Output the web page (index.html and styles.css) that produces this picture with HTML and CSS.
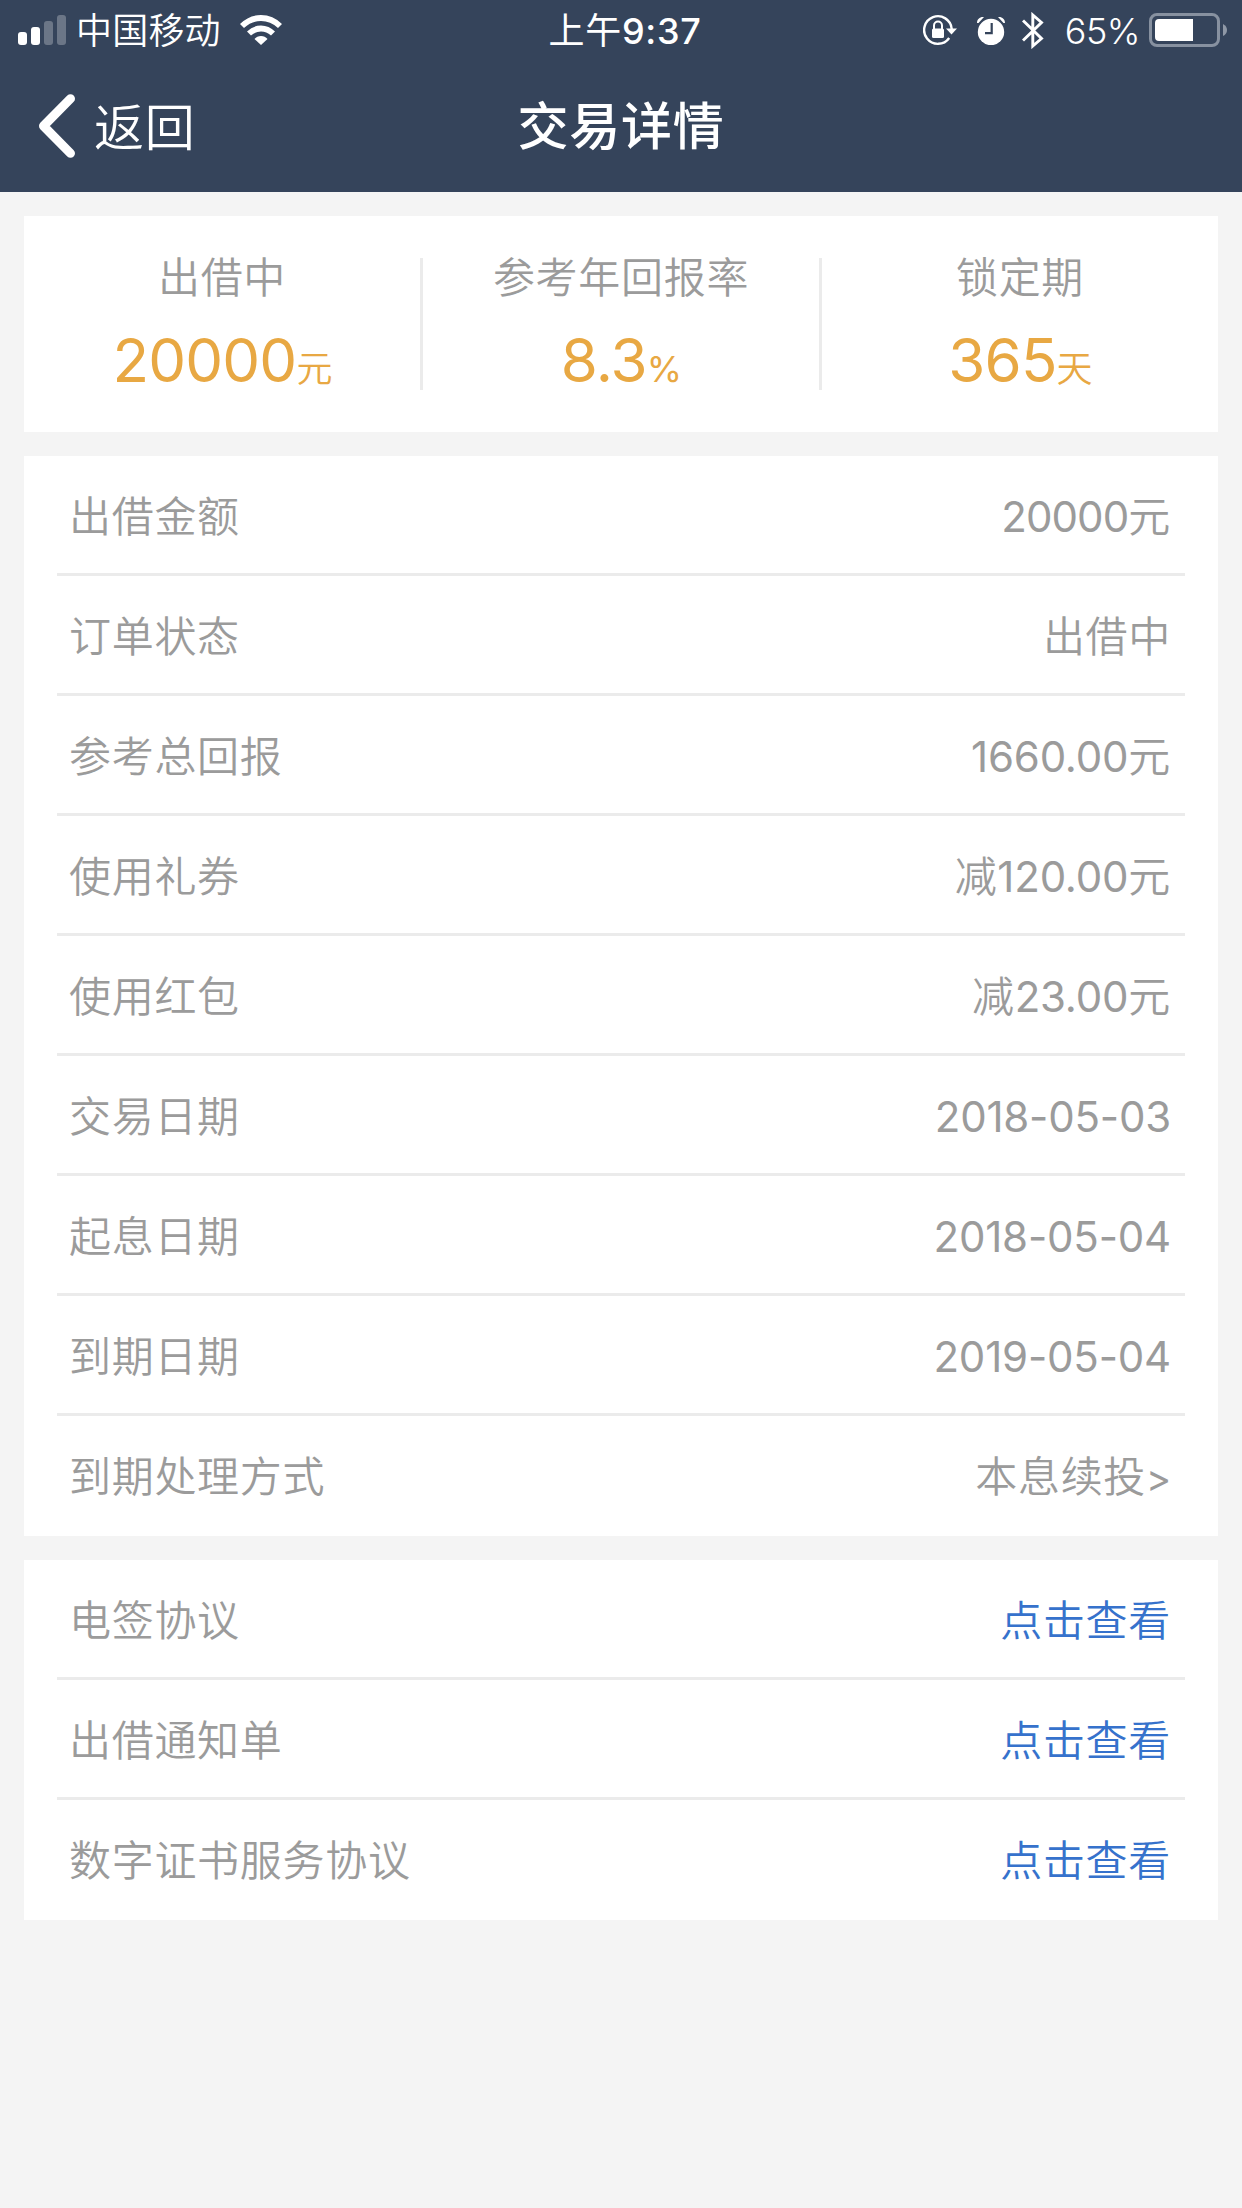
FILE: index.html
```html
<!DOCTYPE html>
<html lang="zh-CN">

<head>
    <meta charset="UTF-8">
    <meta name="viewport" content="width=device-width, initial-scale=1.0">
    <title>交易详情</title>
    <link rel="stylesheet" href="styles.css">
</head>

<body>

    <header class="header">
        <div class="status">
            <div class="status-left">
                <svg class="signal" width="48" height="30" viewBox="0 0 48 30" fill="#fff">
                    <rect x="0" y="17" width="9" height="13" rx="3" />
                    <rect x="13" y="12" width="9" height="18" rx="3" />
                    <rect x="26" y="6" width="9" height="24" rx="3" opacity=".27" />
                    <rect x="39" y="0" width="9" height="30" rx="3" opacity=".27" />
                </svg>
                <span class="carrier">中国移动</span>
                <svg class="wifi" width="42" height="30" viewBox="0 0 42 30" fill="#fff">
                    <path d="M0 9Q9 0 21 0T42 9L38 13Q30.500 6 21 6T4 13Z" />
                    <path d="M7 16.500Q13 10.500 21 10.500T35 16.500L31 20.500Q26.500 16.500 21 16.500T11 20.500Z" />
                    <path d="M14.500 24Q17 21 21 21T27.500 24L21 30Z" />
                </svg>
            </div>
            <div class="time">上午<b>9:37</b></div>
            <div class="status-right">
                <svg class="lock" width="34" height="32" viewBox="0 0 34 32">
                    <path d="M26.200 24A13.800 13.800 0 1 1 28.700 15" fill="none" stroke="#fff" stroke-width="2.400" />
                    <path d="M23 14.500H34L28.500 20.500Z" fill="#fff" />
                    <rect x="9" y="14.500" width="12" height="9.500" rx="1.500" fill="#fff" />
                    <path d="M11 15V11.500a4 4 0 0 1 8 0V15" fill="none" stroke="#fff" stroke-width="2" />
                </svg>
                <svg class="alarm" width="28" height="29" viewBox="0 0 28 29">
                    <circle cx="14" cy="16" r="13.200" fill="#fff" />
                    <path d="M0 7C0 3 3 .5 7 1L1.500 7ZM28 7C28 3 25 .5 21 1L26.500 7Z" fill="#fff" />
                    <path d="M14.700 7V17.200H8" fill="none" stroke="#35445b" stroke-width="2.200" />
                </svg>
                <svg class="bluetooth" width="22" height="37" viewBox="0 0 22 37">
                    <path d="M1 8.500L19.500 26.500L10.800 34V3L19.500 10.500L1 28.500" fill="none" stroke="#fff" stroke-width="2.900" />
                </svg>
                <span class="percent">65%</span>
                <svg class="battery" width="78" height="34" viewBox="0 0 78 34">
                    <rect x="1.500" y="1.500" width="68" height="31" rx="6.500" fill="none" stroke="#8791a0" stroke-width="3" />
                    <path d="M10 6H44V28H10Q6 28 6 24V10Q6 6 10 6Z" fill="#fff" />
                    <path d="M74 11Q78 13 78 17T74 23Z" fill="#8f98a6" />
                </svg>
            </div>
        </div>
        <div class="nav">
            <a class="back">
                <svg width="38" height="64" viewBox="0 0 38 64">
                    <path d="M32.500 4.700L5.500 32L32.500 59.300" fill="none" stroke="#fff" stroke-width="9" stroke-linecap="round" stroke-linejoin="round" />
                </svg>
                <span>返回</span>
            </a>
            <h1>交易详情</h1>
        </div>
    </header>

    <div class="card summary">
        <div class="item">
            <p class="label">出借中</p>
            <p class="value">20000<span>元</span></p>
        </div>
        <div class="item">
            <p class="label">参考年回报率</p>
            <p class="value">8.3<span class="rate">%</span></p>
        </div>
        <div class="item">
            <p class="label">锁定期</p>
            <p class="value">365<span>天</span></p>
        </div>
    </div>

    <ul class="card list">
        <li><span>出借金额</span><span><b class="tight">20000</b>元</span></li>
        <li><span>订单状态</span><span>出借中</span></li>
        <li><span>参考总回报</span><span><b>1660.00</b>元</span></li>
        <li><span>使用礼券</span><span>减<b>120.00</b>元</span></li>
        <li><span>使用红包</span><span>减<b>23.00</b>元</span></li>
        <li><span>交易日期</span><b>2018-05-03</b></li>
        <li><span>起息日期</span><b>2018-05-04</b></li>
        <li><span>到期日期</span><b>2019-05-04</b></li>
        <li><span>到期处理方式</span><span>本息续投<b class="arrow">&gt;</b></span></li>
    </ul>

    <ul class="card list">
        <li><span>电签协议</span><a>点击查看</a></li>
        <li><span>出借通知单</span><a>点击查看</a></li>
        <li><span>数字证书服务协议</span><a>点击查看</a></li>
    </ul>

</body>

</html>
```

FILE: styles.css
```css
* {
    box-sizing: border-box;
    margin: 0;
    padding: 0;
}

body {
    min-height: 100vh;
    background-color: #f4f4f4;
    color: #9b9b9b;
    font-family: Inter, "Noto Sans CJK SC", sans-serif;
    font-size: 42px;
    font-weight: 350;
    letter-spacing: 0.7px;
}

.header {
    height: 192px;
    background-color: #35445b;
    color: #fff;
}

.status {
    display: grid;
    grid-template-columns: 1fr auto 1fr;
    height: 60px;
    font-size: 36px;
    line-height: 62px;
}

.status-left,
.status-right {
    display: flex;
    align-items: center;
    height: 60px;
}

.status-left {
    padding-left: 18px;
}

.carrier {
    margin: 0 19px 0 10px;
    padding-top: 2px;
    letter-spacing: 0.2px;
}

.time {
    padding-left: 8px;
    font-weight: 400;
}

.time b {
    font-weight: 500;
}

.status-right {
    justify-content: flex-end;
    padding-right: 15px;
}

.alarm {
    margin-left: 20px;
}

.bluetooth {
    margin: 0 21px 0 17px;
}

.percent {
    padding-top: 1px;
    font-weight: 350;
    letter-spacing: -0.5px;
}

.battery {
    margin-left: 9px;
}

.nav {
    display: grid;
    grid-template-columns: 1fr auto 1fr;
    align-items: center;
    height: 132px;
}

.back {
    display: flex;
    align-items: center;
    gap: 18px;
    padding-left: 38px;
    font-size: 50px;
}

.back span {
    padding-bottom: 5px;
}

.nav h1 {
    padding-bottom: 7px;
    font-size: 51px;
    font-weight: 500;
}

.card {
    margin: 24px 24px 0;
    background-color: #fff;
}

.summary {
    display: flex;
    height: 216px;
    padding: 42px 0;
}

.item {
    flex: 1;
    text-align: center;
}

.item + .item {
    border-left: 3px solid #ebebeb;
}

.label {
    line-height: 39px;
}

.value {
    margin-top: 28px;
    color: #e8a843;
    font-size: 60px;
    font-weight: 400;
    line-height: 70px;
    letter-spacing: -0.8px;
}

.value span {
    font-size: 36px;
    font-weight: 350;
}

.value .rate {
    font-weight: 400;
}

.list {
    padding: 0 33px;
    list-style: none;
}

.list li {
    display: flex;
    justify-content: space-between;
    height: 120px;
    padding: 0 14px 0 12px;
    border-bottom: 3px solid #ebebeb;
    line-height: 121px;
}

.list li:last-child {
    border-bottom: none;
}

.list a {
    color: #3672cc;
}

.list b {
    font-weight: 400;
    letter-spacing: -0.2px;
}

.list .tight {
    letter-spacing: -0.9px;
}

.list .arrow {
    font-size: 38px;
}
```
